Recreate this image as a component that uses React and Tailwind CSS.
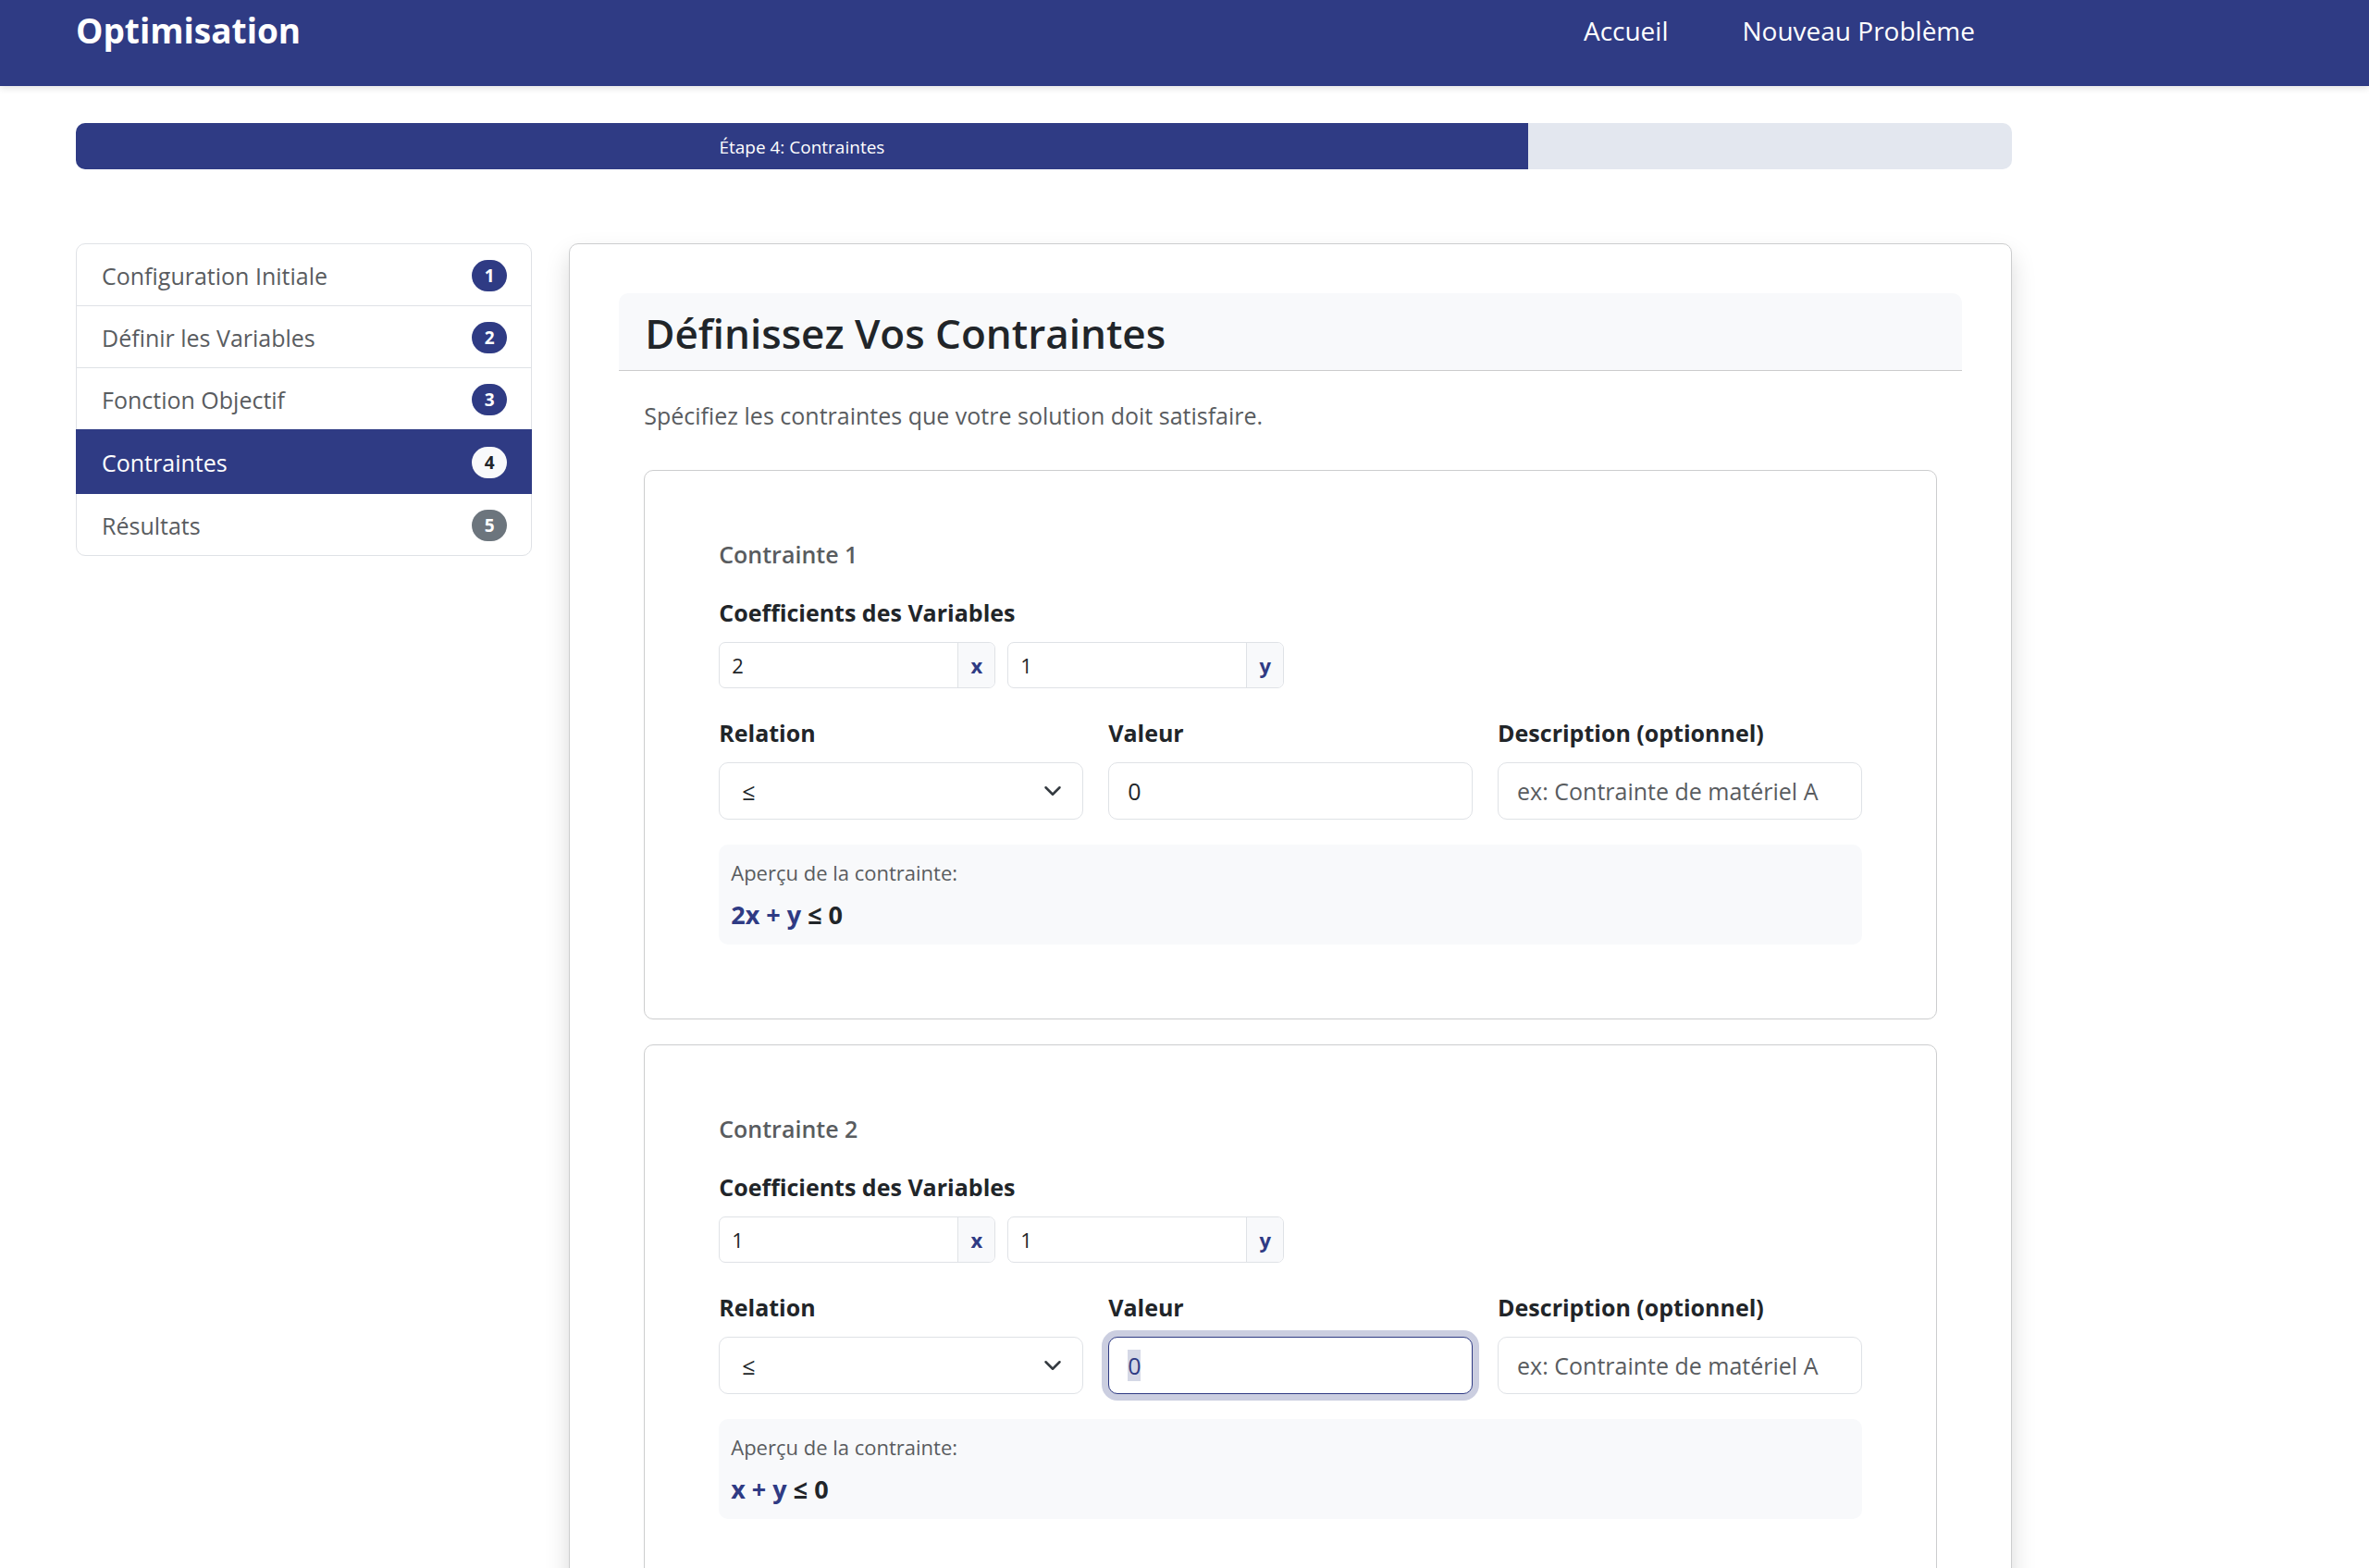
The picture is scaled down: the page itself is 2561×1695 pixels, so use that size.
import { useEffect, useRef } from "react";

const steps = [
  { n: 1, label: "Configuration Initiale", state: "done" },
  { n: 2, label: "Définir les Variables", state: "done" },
  { n: 3, label: "Fonction Objectif", state: "done" },
  { n: 4, label: "Contraintes", state: "active" },
  { n: 5, label: "Résultats", state: "todo" },
];

const constraints = [
  { id: 1, x: "2", y: "1", value: "0", preview: "2x + y", focused: false },
  { id: 2, x: "1", y: "1", value: "0", preview: "x + y", focused: true },
];

const badgeStyles = {
  done: "bg-[#2f3b84] text-white",
  active: "bg-[#f8f9fb] text-[#212529]",
  todo: "bg-[#6c757d] text-white",
};

function Header() {
  return (
    <header className="bg-[#2f3b84] text-white shadow-[0_3px_7px_rgba(0,0,0,0.1)]">
      <div className="flex max-w-[2257px] items-center justify-between px-[82px] pt-[3px] pb-[30px]">
        <a href="#" className="text-[37px] leading-[60px] font-bold">Optimisation</a>
        <nav className="flex text-[28px] leading-[60px]">
          <a href="#" className="px-10">Accueil</a>
          <a href="#" className="px-10">Nouveau Problème</a>
        </nav>
      </div>
    </header>
  );
}

function Steps() {
  return (
    <ul className="rounded-[10px] border border-[#dfe2e6] bg-white">
      {steps.map((s) => (
        <li key={s.n} className={s.state === "active" ? "-mx-px -mt-px bg-[#2f3b84] px-px pt-[2px] pb-[2px] text-white" : "border-b border-[#dfe2e6] text-[#595c5f] last:border-b-0"}>
          <a href="#" className="flex items-center justify-between pt-[14px] pr-[26px] pb-3 pl-[27px]">
            <span className="text-[25px] leading-10">{s.label}</span>
            <span className={`flex h-[34px] w-[38px] items-center justify-center rounded-full text-[19px] font-bold ${badgeStyles[s.state]}`}>{s.n}</span>
          </a>
        </li>
      ))}
    </ul>
  );
}

function Coefficient({ id, name, value }) {
  return (
    <div className="flex h-[50px] w-[299px] overflow-hidden rounded-[7px] border border-[#dfe2e6]">
      <input id={id} aria-label={`Coefficient de ${name}`} defaultValue={value} className="min-w-0 flex-1 px-[13px] text-[22px] outline-none" />
      <label htmlFor={id} className="flex w-10 items-center justify-center border-l border-[#dfe2e6] bg-[#f8f9fb] text-[22px] font-bold text-[#2f3b84]">{name}</label>
    </div>
  );
}

function Constraint({ c }) {
  const valueRef = useRef(null);
  useEffect(() => {
    if (c.focused) {
      valueRef.current.focus();
      valueRef.current.select();
    }
  }, [c.focused]);
  const label = "mb-3 block text-[25px] leading-10 font-bold";
  const control = "block h-[62px] w-full rounded-[10px] border bg-white px-5 text-[25px] leading-10 outline-none placeholder:text-[#595c5f]";
  return (
    <section className="rounded-[10px] border border-[#cccdce] px-20 pt-[74px] pb-20">
      <h3 className="mb-[27px] text-[25px] leading-8 font-semibold text-[#595c5f]">Contrainte {c.id}</h3>
      <p className={label}>Coefficients des Variables</p>
      <div className="mb-7 flex gap-[13px]">
        <Coefficient id={`x${c.id}`} name="x" value={c.x} />
        <Coefficient id={`y${c.id}`} name="y" value={c.y} />
      </div>
      <div className="mb-[27px] grid grid-cols-3 gap-[27px]">
        <div>
          <label htmlFor={`rel${c.id}`} className={label}>Relation</label>
          <div className="relative">
            <select id={`rel${c.id}`} className={`${control} appearance-none border-[#dfe2e6] pl-6`}>
              <option>≤</option>
              <option>≥</option>
              <option>=</option>
            </select>
            <svg viewBox="0 0 16 16" className="pointer-events-none absolute top-[21px] right-[23px] size-5" fill="none" stroke="#343a40" strokeWidth="2" strokeLinecap="round" strokeLinejoin="round">
              <path d="m2 5 6 6 6-6" />
            </svg>
          </div>
        </div>
        <div>
          <label htmlFor={`val${c.id}`} className={label}>Valeur</label>
          <input ref={valueRef} id={`val${c.id}`} defaultValue={c.value} className={`${control} selection:bg-[#2f3b84]/20 selection:text-[#2f3b84] ${c.focused ? "border-[#2f3b84] ring-[7px] ring-[#2f3b84]/25" : "border-[#dfe2e6]"}`} />
        </div>
        <div>
          <label htmlFor={`desc${c.id}`} className={label}>Description (optionnel)</label>
          <input id={`desc${c.id}`} placeholder="ex: Contrainte de matériel A" className={`${control} border-[#dfe2e6]`} />
        </div>
      </div>
      <div className="rounded-[10px] bg-[#f8f9fb] px-[13px] pt-[10px] pb-3">
        <p className="mb-[6px] text-[22px] leading-10 text-[#595c5f]">Aperçu de la contrainte:</p>
        <p className="text-[27px] leading-10 font-bold">
          <span className="text-[#2f3b84]">{c.preview}</span> ≤ {c.value}
        </p>
      </div>
    </section>
  );
}

export default function App() {
  return (
    <div className="h-screen overflow-hidden bg-white font-['Open_Sans','Noto_Sans',sans-serif] text-[#212529]">
      <Header />
      <div className="max-w-[2257px] px-[82px] pt-10">
        <div role="progressbar" aria-valuenow={75} aria-valuemin={0} aria-valuemax={100} aria-label="Progression" className="mb-20 flex h-[50px] overflow-hidden rounded-[10px] bg-[#e3e7ef]">
          <div className="flex w-3/4 items-center justify-center bg-[#2f3b84] pt-0.5 text-[19px] text-white">Étape 4: Contraintes</div>
        </div>
        <div className="grid grid-cols-4 items-start gap-10">
          <Steps />
          <main className="col-span-3 rounded-[10px] border border-[#cccdce] bg-white p-[53px] shadow-[0_13px_27px_rgba(0,0,0,0.15)]">
            <h2 className="rounded-t-[10px] border-b border-[#cbcccd] bg-[#f8f9fb] px-7 pt-[15px] pb-3 text-[44px] leading-[56px] font-semibold">Définissez Vos Contraintes</h2>
            <div className="px-[27px] pt-7">
              <p className="mb-[39px] text-[25px] leading-10 text-[#595c5f]">Spécifiez les contraintes que votre solution doit satisfaire.</p>
              <div className="flex flex-col gap-[27px]">
                {constraints.map((c) => (
                  <Constraint key={c.id} c={c} />
                ))}
              </div>
            </div>
          </main>
        </div>
      </div>
    </div>
  );
}
